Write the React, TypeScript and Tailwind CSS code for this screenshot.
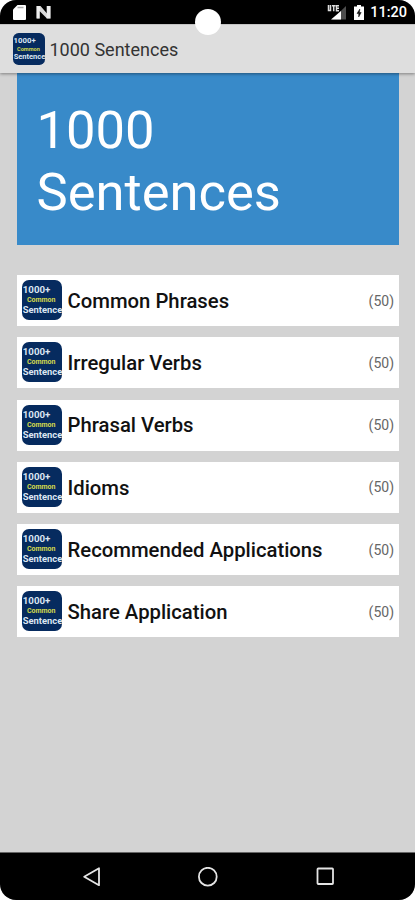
import clsx from "clsx";

interface Category {
  title: string;
  count: number;
}

const categories: Category[] = [
  { title: "Common Phrases", count: 50 },
  { title: "Irregular Verbs", count: 50 },
  { title: "Phrasal Verbs", count: 50 },
  { title: "Idioms", count: 50 },
  { title: "Recommended Applications", count: 50 },
  { title: "Share Application", count: 50 },
];

function AppIcon({ className }: { className?: string }) {
  return (
    <svg viewBox="0 0 40 40" className={clsx("shrink-0", className)}>
      <rect width="40" height="40" rx="7" fill="#062b5f" />
      <g fontFamily="Roboto, sans-serif" fontWeight="700">
        <text x="0.8" y="12.5" fontSize="9.6" fill="#dce6f2" textLength="27.5" lengthAdjust="spacingAndGlyphs">
          1000+
        </text>
        <text x="5" y="22" fontSize="7" fill="#d3da4c" textLength="28.5" lengthAdjust="spacingAndGlyphs">
          Common
        </text>
        <text x="0.8" y="33" fontSize="9.4" fill="#dce6f2" textLength="39.5" lengthAdjust="spacingAndGlyphs">
          Sentence
        </text>
      </g>
    </svg>
  );
}

function StatusBar() {
  return (
    <div className="relative flex h-6 shrink-0 items-center justify-between bg-black pr-[8px] pl-[12.500px] text-white">
      <div className="flex items-center gap-[10px] pt-px">
        <svg viewBox="0 0 13 15" className="h-[15px] w-[13px]">
          <path d="M4.5 0H12a1 1 0 0 1 1 1v13a1 1 0 0 1-1 1H1a1 1 0 0 1-1-1V4.5z" fill="#fff" />
          <path d="M4.5 2.500h6" stroke="#aaa" strokeWidth="1.500" />
        </svg>
        <svg viewBox="0 0 15 13" className="h-[13px] w-[15px]">
          <path d="M0 0h4v12.500H0zM10.500 0h4v12.500h-4z" fill="#8b8b8b" />
          <path d="M1 0h3.500L11 7.500V0h3.500v12.500h-3.500L3.500 5v7.500H1z" fill="#fff" fillOpacity="0.85" />
        </svg>
      </div>
      <div className="flex items-center pt-px">
        <svg viewBox="0 0 20 15" className="mr-[6.500px] h-[15px] w-[20px]">
          <path d="M19 1v13.5H5z" fill="#4d4d4d" />
          <path d="M14 6v8.500H4z" fill="#fff" />
          <path d="M1.500 0v5.500h2V0M5 .8h3.500M6.700 .8v5.500M12 .8H9.500v5H12M9.500 3.300H12" stroke="#ddd" strokeWidth="1.500" fill="none" />
        </svg>
        <svg viewBox="0 0 10 15" className="mr-[6.500px] h-[15px] w-[10px]">
          <path d="M3 0h4v1.500h3V15H0V1.500h3z" fill="#fff" />
          <path d="M5.800 4L3 8.500h1.700V12L7.200 7.500H5.500z" fill="#111" stroke="#111" strokeWidth="0.500" />
        </svg>
        <span className="pt-px text-[14.500px] leading-6 font-medium">11:20</span>
      </div>
      {/* camera cutout */}
      <div className="absolute top-[9px] left-[195px] z-20 size-[26px] rounded-full bg-white" />
    </div>
  );
}

function CategoryRow({ title, count }: Category) {
  return (
    <button className="flex h-[51px] w-full shrink-0 items-center bg-white pr-[5px] pl-[5px] text-left">
      <AppIcon className="mb-px size-10" />
      <span className="ml-[6px] flex-1 pt-px text-[20.300px] font-medium whitespace-nowrap text-[#111]">{title}</span>
      <span className="pt-px text-[14px] text-[#666]">({count})</span>
    </button>
  );
}

function NavBar() {
  return (
    <div className="flex h-[48px] shrink-0 items-center justify-between border-t border-[#666] bg-black pr-[80.500px] pl-[82px]">
      <svg viewBox="0 0 20 20" className="size-5" fill="none" stroke="#e4e4e4" strokeWidth="1.800" strokeLinejoin="round">
        <path d="M17 1.200v17L2.200 9.700z" />
      </svg>
      <svg viewBox="0 0 20 20" className="size-5" fill="none" stroke="#e4e4e4" strokeWidth="1.800">
        <circle cx="9.800" cy="9.700" r="8.900" />
      </svg>
      <svg viewBox="0 0 20 20" className="size-5" fill="none" stroke="#e4e4e4" strokeWidth="1.800">
        <rect x="2.500" y="1.500" width="15.500" height="15.500" rx="0.800" />
      </svg>
    </div>
  );
}

export default function App() {
  return (
    <div className="h-[900px] w-[415px] bg-white font-['Roboto',sans-serif]">
      <div className="flex h-full flex-col overflow-hidden rounded-[16px] bg-[#d3d3d3]">
        <StatusBar />
        <header className="z-10 flex h-[49px] shrink-0 items-center border-t border-[#c4c4c4] bg-[#dedede] pl-[13px] shadow-[0_1px_3px_rgba(0,0,0,0.4)]">
          <AppIcon className="size-8" />
          <h1 className="ml-[4.500px] pt-px text-[18px] text-[#333]">1000 Sentences</h1>
        </header>
        <main className="flex flex-1 flex-col pr-[16px] pl-[16.500px]">
          <div className="h-[172px] shrink-0 bg-[#388ac9] px-5 pt-[26px] text-[52.500px] leading-[62px] text-white">
            1000
            <br />
            Sentences
          </div>
          <div className="mt-[30px] flex flex-col gap-[11.300px]">
            {categories.map((category) => (
              <CategoryRow key={category.title} {...category} />
            ))}
          </div>
        </main>
        <NavBar />
      </div>
    </div>
  );
}
